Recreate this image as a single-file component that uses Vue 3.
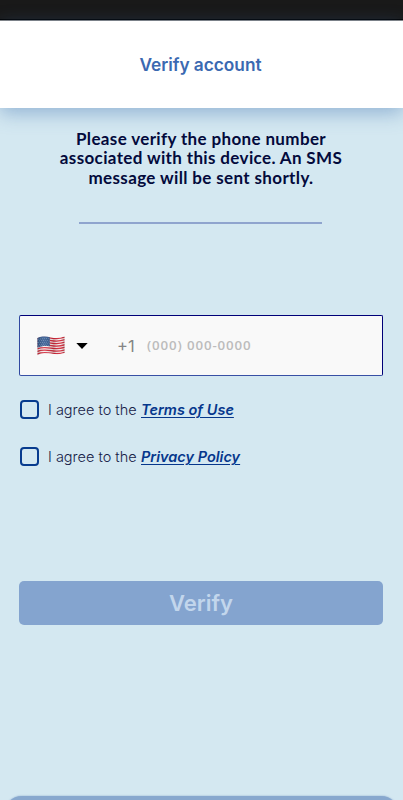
<script setup>
const lines = [
  'Please verify the phone number',
  'associated with this device. An SMS',
  'message will be sent shortly.',
]
const agreements = [
  { id: 'terms', label: 'Terms of Use' },
  { id: 'privacy', label: 'Privacy Policy' },
]
const stripes = [0, 1, 2, 3, 4, 5, 6]
const stars = []
for (let r = 0; r < 5; r++) {
  for (let c = 0; c < 6; c++) stars.push({ x: 1.5 + c * 1.95 + (r % 2) * 0.9, y: 3.1 - c * 0.12 + r * 1.75 })
}
</script>

<template>
  <div class="screen">
    <div class="status"></div>
    <header class="header"><h1 class="title">Verify account</h1></header>
    <main class="content">
      <p class="intro">
        <span v-for="(l, i) in lines" :key="l" class="line" :class="'line-' + i">{{ l }}</span>
      </p>
      <div class="divider"></div>
      <div class="phone">
        <svg class="flag" width="28" height="20" viewBox="0 0 28 20">
          <defs>
            <clipPath id="wave">
              <path d="M0.5 2.1C5 .1 9 .4 14 1.4S23 2.2 27.5.6V17.1C23 18.7 19 18.3 14 17.6S5 17.2.5 19.2Z" />
            </clipPath>
            <linearGradient id="shade">
              <stop offset="0" stop-color="#000" stop-opacity=".2" />
              <stop offset=".25" stop-color="#fff" stop-opacity=".12" />
              <stop offset=".6" stop-color="#000" stop-opacity=".12" />
              <stop offset=".82" stop-color="#fff" stop-opacity=".08" />
              <stop offset="1" stop-color="#000" stop-opacity=".22" />
            </linearGradient>
          </defs>
          <g clip-path="url(#wave)">
            <rect width="28" height="20" fill="#f7eeee" />
            <path
              v-for="n in stripes" :key="n" d="M0 2.9C5 .7 9 1.1 14 2S23 2.8 28 1.1"
              :transform="`translate(0 ${n * 2.53})`" fill="none" stroke="#d32638" stroke-width="1.3"
            />
            <path d="M0 0H12.8V10.2C8 9.5 4 10 0 11.7Z" fill="#315991" />
            <circle v-for="(s, i) in stars" :key="i" :cx="s.x" :cy="s.y" r=".36" fill="#cbd8e7" />
            <rect width="28" height="20" fill="url(#shade)" />
          </g>
        </svg>
        <svg class="caret" width="12" height="6" viewBox="0 0 12 6"><path d="M.3 0H11.7L6 6Z" fill="#000" /></svg>
        <span class="code">+1</span>
        <span class="placeholder">(000) 000-0000</span>
      </div>
      <div class="agreements">
        <div v-for="a in agreements" :key="a.id" class="agreement">
          <span class="box"></span>
          <span class="agree">I agree to the</span>
          <a class="link" :class="a.id">{{ a.label }}</a>
        </div>
      </div>
      <button class="verify">Verify</button>
    </main>
    <div class="sheet"></div>
  </div>
</template>

<style>
body { margin: 0; background: #d4e8f1; }
</style>

<style scoped>
.screen {
  box-sizing: border-box;
  width: 403px;
  height: 800px;
  display: flex;
  flex-direction: column;
  overflow: hidden;
  background: #d4e8f1;
  font-family: Inter, sans-serif;
}
.status {
  height: 21px;
  flex: none;
  background: linear-gradient(#191919 19px, #000 19px, #000 20px, #858585 20px);
}
.header {
  box-sizing: border-box;
  height: 87px;
  padding-right: 2px;
  flex: none;
  display: flex;
  align-items: center;
  justify-content: center;
  background: #fff;
  box-shadow: 0 5px 18px rgba(62, 111, 175, .44);
}
.title { margin: 0; font-size: 17.3px; line-height: 22px; font-weight: 600; letter-spacing: -.02px; color: #3b69b1; white-space: nowrap; }
.content { display: flex; flex-direction: column; padding: 21px 20px 0 19px; }
.intro {
  margin: 0;
  display: flex;
  flex-direction: column;
  align-items: center;
  font-family: Lato, sans-serif;
  font-size: 17px;
  font-weight: 700;
  line-height: 19.4px;
  letter-spacing: .36px;
  color: #030a3c;
  white-space: nowrap;
}
.divider { width: 243px; height: 2px; margin: 34.8px 0 0 60px; background: #8fa4ce; }
.phone {
  box-sizing: border-box;
  height: 61px;
  margin-top: 91px;
  padding-left: 16.5px;
  display: flex;
  align-items: center;
  background: #f9f9f9;
  border: 1px solid #000078;
  border-left-color: #3048a0;
  border-bottom-color: #3850a5;
  border-radius: 2px;
}
.caret { margin-left: 11px; }
.code { margin-left: 29.5px; width: 30px; font-size: 16.5px; color: #858585; }
.placeholder {
  padding-bottom: 2px;
  font-family: "Open Sans", sans-serif;
  font-size: 13.3px;
  font-weight: 600;
  letter-spacing: .88px;
  color: #bcbcbc;
  white-space: nowrap;
}
.agreements { display: flex; flex-direction: column; gap: 27.5px; margin-top: 23.2px; padding-left: 1px; }
.agreement { display: flex; align-items: center; height: 20px; white-space: nowrap; font-size: 14.5px; }
.box { box-sizing: border-box; width: 19px; height: 19px; border: 2px solid #073b8e; border-radius: 4px; }
.agree { width: 93px; margin-left: 9px; box-sizing: border-box; color: #172248; font-weight: 300; }
.link {
  font-style: italic;
  font-weight: 600;
  color: #06378c;
  text-decoration: underline;
  text-decoration-thickness: 1px;
  text-underline-offset: 2px;
}
.verify {
  height: 44px;
  margin: 113.8px 0 0;
  padding: 0;
  border: 0;
  border-radius: 5px;
  background: #84a4cf;
  color: #c2d6ec;
  font-family: Inter, sans-serif;
  font-size: 22px;
  font-weight: 600;
}
.sheet {
  flex: none;
  height: 30px;
  margin: auto 4px -26px;
  border-radius: 18px 18px 0 0;
  background: #88a8ce;
  box-shadow: 0 0 2px #88a8ce;
}
</style>
